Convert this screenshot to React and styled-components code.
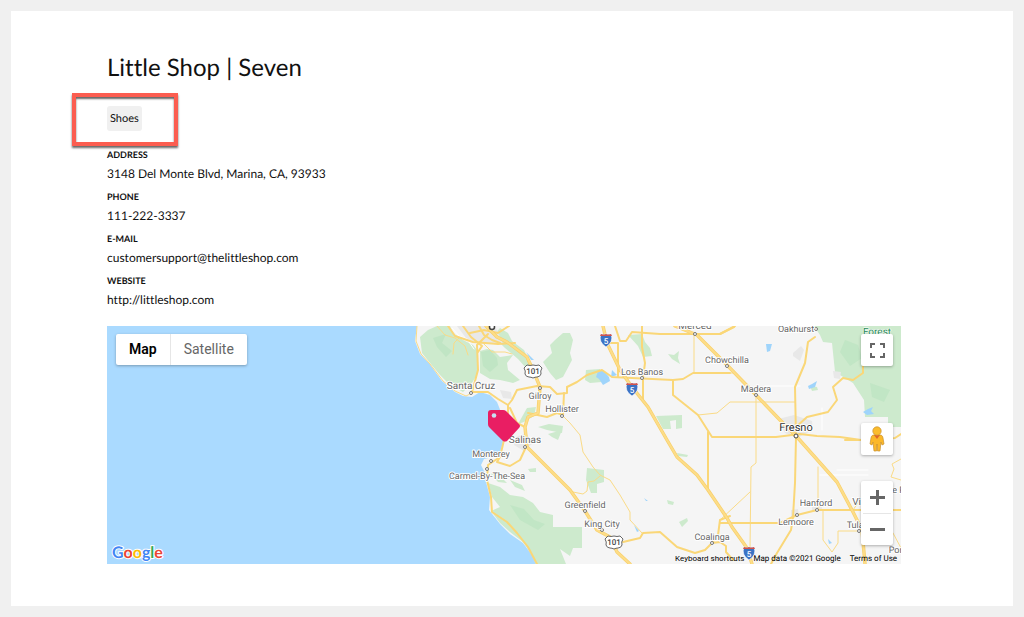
import React from "react";
import styled, { createGlobalStyle } from "styled-components";

const details = [
  { label: "Address", value: "3148 Del Monte Blvd, Marina, CA, 93933" },
  { label: "Phone", value: "111-222-3337" },
  {
    label: "E-mail",
    value: "customersupport@thelittleshop.com",
    href: "mailto:customersupport@thelittleshop.com",
  },
  {
    label: "Website",
    value: "http://littleshop.com",
    href: "http://littleshop.com",
  },
];

const parks = [
  "M420 337L428 330L437 326H450L453 333L463 340L473 345L477 350V363L478 373L472 383L463 392L450 385L440 375L430 363L422 353Z",
  "M480 351L487 349L493 350L500 357L513 355L507 363L508 370L520 380L513 383L500 380L490 379L480 373Z",
  "M500 328L508 333L512 341L524 350L532 366L527 369L518 359L505 348L498 341L492 337Z",
  "M563 333L570 333L573 340L570 353L572 360L563 377L556 380L550 373L543 362L552 353L550 345L555 340Z",
  "M488 483L500 487L510 495L523 497L533 503L540 512L553 515V527H582V548H573L570 556L560 549L566 564H536L532 555L523 542L510 532L500 523L491 511L500 507L492 497Z",
  "M814 326H901V427H888V417H865L864 400L853 383L835 372L832 343L823 342L820 335Z",
  "M628 335L642 334L645 342L650 348L652 356L643 357L638 346Z",
  "M668 354L674 355L679 351L678 358L680 364L672 359Z",
  "M586 370L600 369L602 382L590 383L585 380Z",
  "M656 416L682 415V428L676 429V420L670 421L671 429H663Z",
  "M587 468L604 470V482L597 484V493H591L586 480Z",
  "M667 500L674 502L673 505L668 504ZM679 522L687 518L688 521L682 527Z",
  "M527 408L536 407L534 416L524 422L518 424ZM538 427L549 424L563 426L562 433L547 430Z",
  "M548 434L562 430L558 440L552 437ZM528 469L536 468V472H530Z",
  "M810 386L817 387L818 390L812 391ZM677 453L688 455L687 457L678 456Z",
  "M490 473L500 476L507 483L498 482ZM510 480L522 485L525 491L515 487Z",
];

const lakes = [
  "M598 371L603 370L609 377L610 381L603 385L599 379L596 377ZM612 370L617 375L611 377Z",
  "M526 352L534 360L531 360Z",
  "M766 344H772L770 351L767 352Z",
  "M808 386L812 384L817 381L815 387L809 389Z",
  "M863 412L868 409L873 407L871 411L874 414L867 415Z",
  "M828 539L832 543L829 544ZM634 525L639 531L637 532ZM644 498L648 501L646 501Z",
];

const urban = [
  "M793 353L801 346L804 350L800 361L793 356Z",
  "M778 419L794 415L812 421L813 430L797 438L785 433Z",
  "M833 371L841 372L840 379L834 378Z",
  "M457 326H495L503 343L480 344L466 338Z",
  "M516 437L526 433L533 443L524 451L514 445ZM500 390L511 392L512 399L503 398Z",
  "M791 510L798 509L799 517L791 517ZM812 504H822V511H812Z",
];

const minorRoads = [
  "M417 326L416 341L421 354L430 364L443 381L455 391L466 396L472 393",
  "M437 326L445 335L455 338L465 346L468 355",
  "M453 354L454 343L459 338",
  "M483 343L492 352L505 352L512 354",
  "M562 415L570 423L580 435L583 452L593 467L600 475L610 480L620 495L630 512V520L642 533",
  "M573 492L583 494L587 491L588 482L594 481L600 476",
  "M694 335V373",
  "M698 415L717 413L730 402H795",
  "M727 365L735 373H720",
  "M756 395V463L751 467L750 550",
  "M720 520L750 492",
  "M818 467V510M823 510V540L832 552L838 543V531H857",
  "M901 459L892 464L894 469L891 477L901 480",
  "M893 533L901 548M853 510L860 500",
];

const roads = [
  "M472 392L478 370L477 345L488 334",
  "M472 392L488 392L498 399L508 405V420L513 428L504 440L500 457L488 465L487 480L491 497L492 512L507 522L517 533L528 547L537 564",
  "M508 405L512 400L517 390L537 386L550 387L557 394L567 393V387L577 382L587 375L602 370L612 377L632 378L673 380L683 379L693 373H730",
  "M510 408L517 423L525 427",
  "M528 413L547 417L557 413L563 415L564 393",
  "M500 457L497 462L510 466L520 460L526 447",
  "M673 380V395L698 415L712 437H776L800 434L817 436L840 437L861 440",
  "M708 432V490",
  "M815 337L808 342L805 363L795 387L796 437L795 483L793 517L791 530L777 553L771 564",
  "M796 427L807 417L828 412L837 400L833 387L843 378L853 380L863 373V366",
  "M720 523H780L797 515L817 510H901",
  "M623 542L640 538L643 533L660 532L677 547L695 553L705 550L712 543L720 542L726 546V552L733 560",
  "M712 543L718 535L720 520L730 516",
  "M615 326L620 341H626L632 332L660 334H720L734 327",
  "M610 343H618V377",
  "M642 326V347L645 363L643 378V400",
  "M720 334L735 326M845 440H863L895 438L901 434",
  "M448 326L455 336L473 342L498 344L515 343",
  "M463 326L471 337L482 346L478 352",
  "M479 326L484 335L492 340L500 343",
  "M470 333L484 330L498 333L509 326",
];

const highways = [
  "M603 326L607 343L620 370L632 387L648 407L667 440L677 457L697 475L708 490L727 518L732 527L747 548L752 564",
  "M675 326L697 335L727 365L756 395L780 420L797 437L837 482L853 512L862 530L865 564",
  "M486 326L497 337L507 342L527 357L533 370L540 387L539 400L538 413L528 417L525 427L527 447L547 467L570 490L585 511L597 530L610 537L617 552L630 564",
];

const places = [
  { name: "Santa Cruz", x: 471, y: 389, size: 10, dot: [471, 393] },
  { name: "Gilroy", x: 540, y: 399, size: 9, dot: [540, 388] },
  { name: "Hollister", x: 562, y: 412, size: 9, dot: [562, 416] },
  { name: "Salinas", x: 525, y: 443, size: 10, dot: [525, 447] },
  { name: "Monterey", x: 491, y: 457, size: 9, dot: [491, 461] },
  { name: "Carmel-By-The-Sea", x: 487, y: 479, size: 9, dot: [487, 469] },
  { name: "Greenfield", x: 585, y: 508, size: 9, dot: [585, 511] },
  { name: "King City", x: 602, y: 527, size: 9, dot: [602, 530] },
  { name: "Los Banos", x: 642, y: 375, size: 9, dot: [642, 378] },
  { name: "Merced", x: 695, y: 329, size: 10, dot: [695, 334] },
  { name: "Chowchilla", x: 727, y: 363, size: 9, dot: [727, 366] },
  { name: "Madera", x: 756, y: 392, size: 9, dot: [756, 395] },
  { name: "Oakhurst", x: 796, y: 332, size: 9, dot: [816, 329] },
  { name: "Fresno", x: 796, y: 431, size: 11, dot: [796, 436], city: true },
  { name: "Hanford", x: 816, y: 506, size: 9, dot: [817, 510] },
  { name: "Lemoore", x: 796, y: 525, size: 9, dot: [797, 515] },
  { name: "Coalinga", x: 712, y: 540, size: 9, dot: [712, 543] },
  { name: "Visalia", x: 867, y: 505, size: 10 },
  { name: "Tulare", x: 859, y: 528, size: 9, dot: [859, 531] },
  { name: "Porterville", x: 909, y: 553, size: 9 },
  { name: "Three Rivers", x: 899, y: 493, size: 9 },
  { name: "Forest", x: 877, y: 335, size: 10, forest: true },
];

function UsShield({ x, y }) {
  return (
    <g transform={`translate(${x} ${y})`}>
      <path
        d="M-6 -6Q-3 -5 0 -6Q3 -5 6 -6L9 -3Q7 0 8 3Q7 6 4 6Q2 6 0 7Q-2 6 -4 6Q-7 6 -8 3Q-7 0 -9 -3Z"
        fill="#fff"
        stroke="#666"
      />
      <ShieldText y="3" $dark>
        101
      </ShieldText>
    </g>
  );
}

function InterstateShield({ x, y }) {
  return (
    <g transform={`translate(${x} ${y})`}>
      <path
        d="M-5 -6Q-2 -5 0 -6Q2 -5 5 -6Q8 2 0 7Q-8 2 -5 -6Z"
        fill="#3b73c5"
        stroke="#fff"
        strokeWidth="0.6"
      />
      <path d="M-5 -6Q-2 -5 0 -6Q2 -5 5 -6L6 -4H-6Z" fill="#d3544c" />
      <ShieldText y="4">5</ShieldText>
    </g>
  );
}

function MapDrawing() {
  return (
    <MapSvg
      viewBox="107 326 794 238"
      preserveAspectRatio="xMidYMid slice"
      role="img"
      aria-label="Map of the Monterey Bay area"
    >
      <rect x="-893" y="326" width="2794" height="238" fill="#aadaff" />
      <path
        d="M417 326L415 341L420 354L429 363L442 381L455 392L463 396L472 397L480 392L490 395L497 402L501 412L507 430L503 443L499 455L493 457L484 459L481 465L485 473L486 482L490 497L489 510L500 524L510 534L523 543L532 555L536 564H1901V326Z"
        fill="#f5f5f5"
      />
      <g fill="#cdeacd">
        {parks.map((d) => (
          <path key={d} d={d} />
        ))}
      </g>
      <g fill="#b9e2bf" opacity="0.6">
        <path d="M481 352L490 350L497 358L498 365L490 372L483 366Z" />
        <path d="M433 338L446 334L442 343L452 351L446 357L437 347Z" />
        <path d="M845 340L858 345L862 358L850 366L840 352ZM870 383L890 390L884 402L872 397Z" />
        <path d="M510 505L524 509L534 520L545 524L538 530L520 520Z" />
      </g>
      <g fill="#e8e8e8">
        {urban.map((d) => (
          <path key={d} d={d} />
        ))}
      </g>
      <g fill="#9fd4fb">
        {lakes.map((d) => (
          <path key={d} d={d} />
        ))}
      </g>
      <g fill="none" strokeLinejoin="round" strokeLinecap="round">
        <path
          d="M452 328L459 336L467 339L474 349M800 386H765M822 408V430M837 470H868M820 475H868"
          stroke="#fff"
        />
        <g stroke="#fadb87" strokeWidth="1">
          {minorRoads.map((d) => (
            <path key={d} d={d} />
          ))}
        </g>
        <g stroke="#fad778" strokeWidth="2">
          {roads.map((d) => (
            <path key={d} d={d} />
          ))}
        </g>
        <g stroke="#f8d06c" strokeWidth="3.400">
          {highways.map((d) => (
            <path key={d} d={d} />
          ))}
        </g>
        <g stroke="#fddd88" strokeWidth="2">
          {highways.map((d) => (
            <path key={d} d={d} />
          ))}
        </g>
      </g>
      <UsShield x={533} y={371} />
      <UsShield x={614} y={542} />
      <InterstateShield x={606} y={340} />
      <InterstateShield x={632} y={389} />
      <InterstateShield x={749} y={553} />
      <circle cx="492" cy="327" r="2.5" fill="#fff" stroke="#444" strokeWidth="1.5" />
      {places.map(({ name, x, y, size, dot, city, forest }) => (
        <g key={name}>
          {dot && (
            <circle
              cx={dot[0]}
              cy={dot[1]}
              r={city ? 2 : 1.5}
              fill="#fff"
              stroke={city ? "#444" : "#777"}
            />
          )}
          <PlaceName x={x} y={y} $size={size} $city={city} $forest={forest}>
            {name}
          </PlaceName>
        </g>
      ))}
      <path
        d="M491 410H503Q505 410 506 411L519 424Q521 426 519 428L507 441Q505 442 503 441L489 427Q488 426 488 424V413Q488 410 491 410Z"
        fill="#e91e63"
      />
      <circle cx="494" cy="415.500" r="2.300" fill="#c9dff3" />
    </MapSvg>
  );
}

function Pegman() {
  return (
    <svg width="18" height="26" viewBox="0 0 18 26" aria-hidden="true">
      <path
        d="M5 9H13Q15 10 15 12L16 18L14 19L13 16L12 25H9.500L9 18L8.500 25H6L5 16L4 19L2 18L3 12Q3 10 5 9Z"
        fill="#fbb829"
        stroke="#c9912f"
        strokeWidth="0.7"
      />
      <path d="M6 9H12L9 13Z" fill="#e0652a" />
      <circle cx="9" cy="5" r="4.200" fill="#fbbc2c" stroke="#c9912f" strokeWidth="0.7" />
    </svg>
  );
}

function App() {
  return (
    <Page>
      <GlobalStyle />
      <Card>
        <Title>Little Shop | Seven</Title>
        <Highlight>
          <Tag>Shoes</Tag>
        </Highlight>
        <Details>
          {details.map(({ label, value, href }) => (
            <Detail key={label}>
              <Label>{label}</Label>
              <Value>{href ? <TextLink href={href}>{value}</TextLink> : value}</Value>
            </Detail>
          ))}
        </Details>
        <MapBox>
          <MapDrawing />
          <MapTypes>
            <MapType type="button" $active>
              Map
            </MapType>
            <MapType type="button">Satellite</MapType>
          </MapTypes>
          <Controls>
            <Control type="button" aria-label="Toggle fullscreen view">
              <svg width="15" height="15" viewBox="0 0 15 15" aria-hidden="true">
                <path
                  d="M1 5V1H5M10 1H14V5M14 10V14H10M5 14H1V10"
                  fill="none"
                  stroke="#666"
                  strokeWidth="2"
                />
              </svg>
            </Control>
            <LowerControls>
              <Control type="button" aria-label="Street View">
                <Pegman />
              </Control>
              <ZoomGroup>
                <ZoomButton type="button" aria-label="Zoom in">
                  <svg width="15" height="15" viewBox="0 0 15 15" aria-hidden="true">
                    <path d="M7.500 0V15M0 7.500H15" stroke="#666" strokeWidth="3" />
                  </svg>
                </ZoomButton>
                <ZoomButton type="button" aria-label="Zoom out">
                  <svg width="15" height="15" viewBox="0 0 15 15" aria-hidden="true">
                    <path d="M0 7.500H15" stroke="#666" strokeWidth="3" />
                  </svg>
                </ZoomButton>
              </ZoomGroup>
            </LowerControls>
          </Controls>
          <GoogleLogo href="https://maps.google.com" aria-label="Google">
            <Letter $color="#4285f4">G</Letter>
            <Letter $color="#ea4335">o</Letter>
            <Letter $color="#fbbc05">o</Letter>
            <Letter $color="#4285f4">g</Letter>
            <Letter $color="#34a853">l</Letter>
            <Letter $color="#ea4335">e</Letter>
          </GoogleLogo>
          <Attribution>
            <ShortcutsButton type="button">Keyboard shortcuts</ShortcutsButton>
            <span>Map data ©2021 Google</span>
            <TextLink href="https://www.google.com/help/terms_maps.html">
              Terms of Use
            </TextLink>
          </Attribution>
        </MapBox>
      </Card>
    </Page>
  );
}

export default App;

const GlobalStyle = createGlobalStyle`
  * {
    box-sizing: border-box;
  }

  body {
    margin: 0;
    background-color: #f0f0f0;
    color: #111;
    font-family: Lato, "Liberation Sans", sans-serif;
    font-variant-ligatures: none;
    text-rendering: geometricPrecision;
  }
`;

const Page = styled.main`
  min-height: 100vh;
  padding: 11px;
  display: flex;
`;

const Card = styled.section`
  flex: 1;
  min-width: 0;
  padding: 42px 112px 42px 96px;
  background-color: white;
`;

const Title = styled.h1`
  margin: 0 0 10px;
  font-size: 24px;
  font-weight: 400;
  line-height: 30px;
`;

const Highlight = styled.div`
  width: fit-content;
  margin-left: -35px;
  padding: 9px 32px 11px 31px;
  border: 4px solid #fb5d50;
  box-shadow: 0 2px 2px rgba(0, 0, 0, 0.6), inset 0 2px 2px rgba(0, 0, 0, 0.6);
`;

const Tag = styled.div`
  padding: 0 3px;
  border-radius: 3px;
  background-color: #f0f0f0;
  font-size: 11px;
  line-height: 25px;
`;

const Details = styled.dl`
  margin: 0 0 12px;
`;

const Detail = styled.div`
  padding-bottom: 4px;
`;

const Label = styled.dt`
  font-size: 9px;
  font-weight: 700;
  line-height: 18px;
  text-transform: uppercase;
`;

const Value = styled.dd`
  margin: 0;
  font-size: 12px;
  line-height: 20px;
`;

const TextLink = styled.a`
  color: inherit;
  text-decoration: none;
`;

const MapBox = styled.div`
  position: relative;
  height: 238px;
  overflow: hidden;
  font-family: Roboto, "Liberation Sans", sans-serif;
`;

const MapSvg = styled.svg`
  display: block;
  width: 100%;
  height: 100%;
`;

const PlaceName = styled.text`
  fill: ${(props) =>
    props.$forest ? "#1f8a55" : props.$city ? "#333" : "#666"};
  stroke: white;
  stroke-width: ${(props) => (props.$forest ? 1 : 2)}px;
  stroke-linejoin: round;
  paint-order: stroke;
  font-size: ${(props) => props.$size}px;
  text-anchor: middle;
`;

const ShieldText = styled.text`
  fill: ${(props) => (props.$dark ? "#444" : "white")};
  font-size: 8px;
  font-weight: 500;
  text-anchor: middle;
`;

const MapTypes = styled.div`
  position: absolute;
  top: 8px;
  left: 9px;
  display: flex;
  border-radius: 2px;
  background-color: white;
  box-shadow: 0 1px 3px rgba(0, 0, 0, 0.3);
`;

const MapType = styled.button`
  padding: 0 13px;
  border: 0;
  background: none;
  color: ${(props) => (props.$active ? "#000" : "#666")};
  font-family: inherit;
  font-size: 14px;
  font-weight: ${(props) => (props.$active ? 600 : 400)};
  line-height: 31px;

  & + & {
    border-left: 1px solid #e6e6e6;
  }
`;

const Controls = styled.div`
  position: absolute;
  top: 8px;
  right: 8px;
  bottom: 19px;
  display: flex;
  flex-direction: column;
  justify-content: space-between;
`;

const LowerControls = styled.div`
  display: flex;
  flex-direction: column;
  gap: 26px;
`;

const Control = styled.button`
  display: flex;
  align-items: center;
  justify-content: center;
  width: 32px;
  height: 32px;
  padding: 0;
  border: 0;
  border-radius: 2px;
  background-color: white;
  box-shadow: 0 1px 3px rgba(0, 0, 0, 0.3);
`;

const ZoomGroup = styled.div`
  padding: 0 2px;
  border-radius: 2px;
  background-color: white;
  box-shadow: 0 1px 3px rgba(0, 0, 0, 0.3);
`;

const ZoomButton = styled.button`
  display: flex;
  align-items: center;
  justify-content: center;
  width: 28px;
  height: 32px;
  padding: 0;
  border: 0;
  background: none;

  & + & {
    border-top: 1px solid #e6e6e6;
  }
`;

const GoogleLogo = styled.a`
  position: absolute;
  bottom: 0;
  left: 5px;
  font-family: Lato, sans-serif;
  font-size: 16px;
  font-weight: 700;
  line-height: 22px;
  text-decoration: none;
`;

const Letter = styled.span`
  color: ${(props) => props.$color};
  -webkit-text-stroke: 2px white;
  paint-order: stroke;
`;

const Attribution = styled.div`
  position: absolute;
  right: 4px;
  bottom: 0;
  display: flex;
  gap: 9px;
  color: black;
  font-size: 8px;
  line-height: 11px;
`;

const ShortcutsButton = styled.button`
  padding: 0;
  border: 0;
  background: none;
  color: inherit;
  font: inherit;
`;
